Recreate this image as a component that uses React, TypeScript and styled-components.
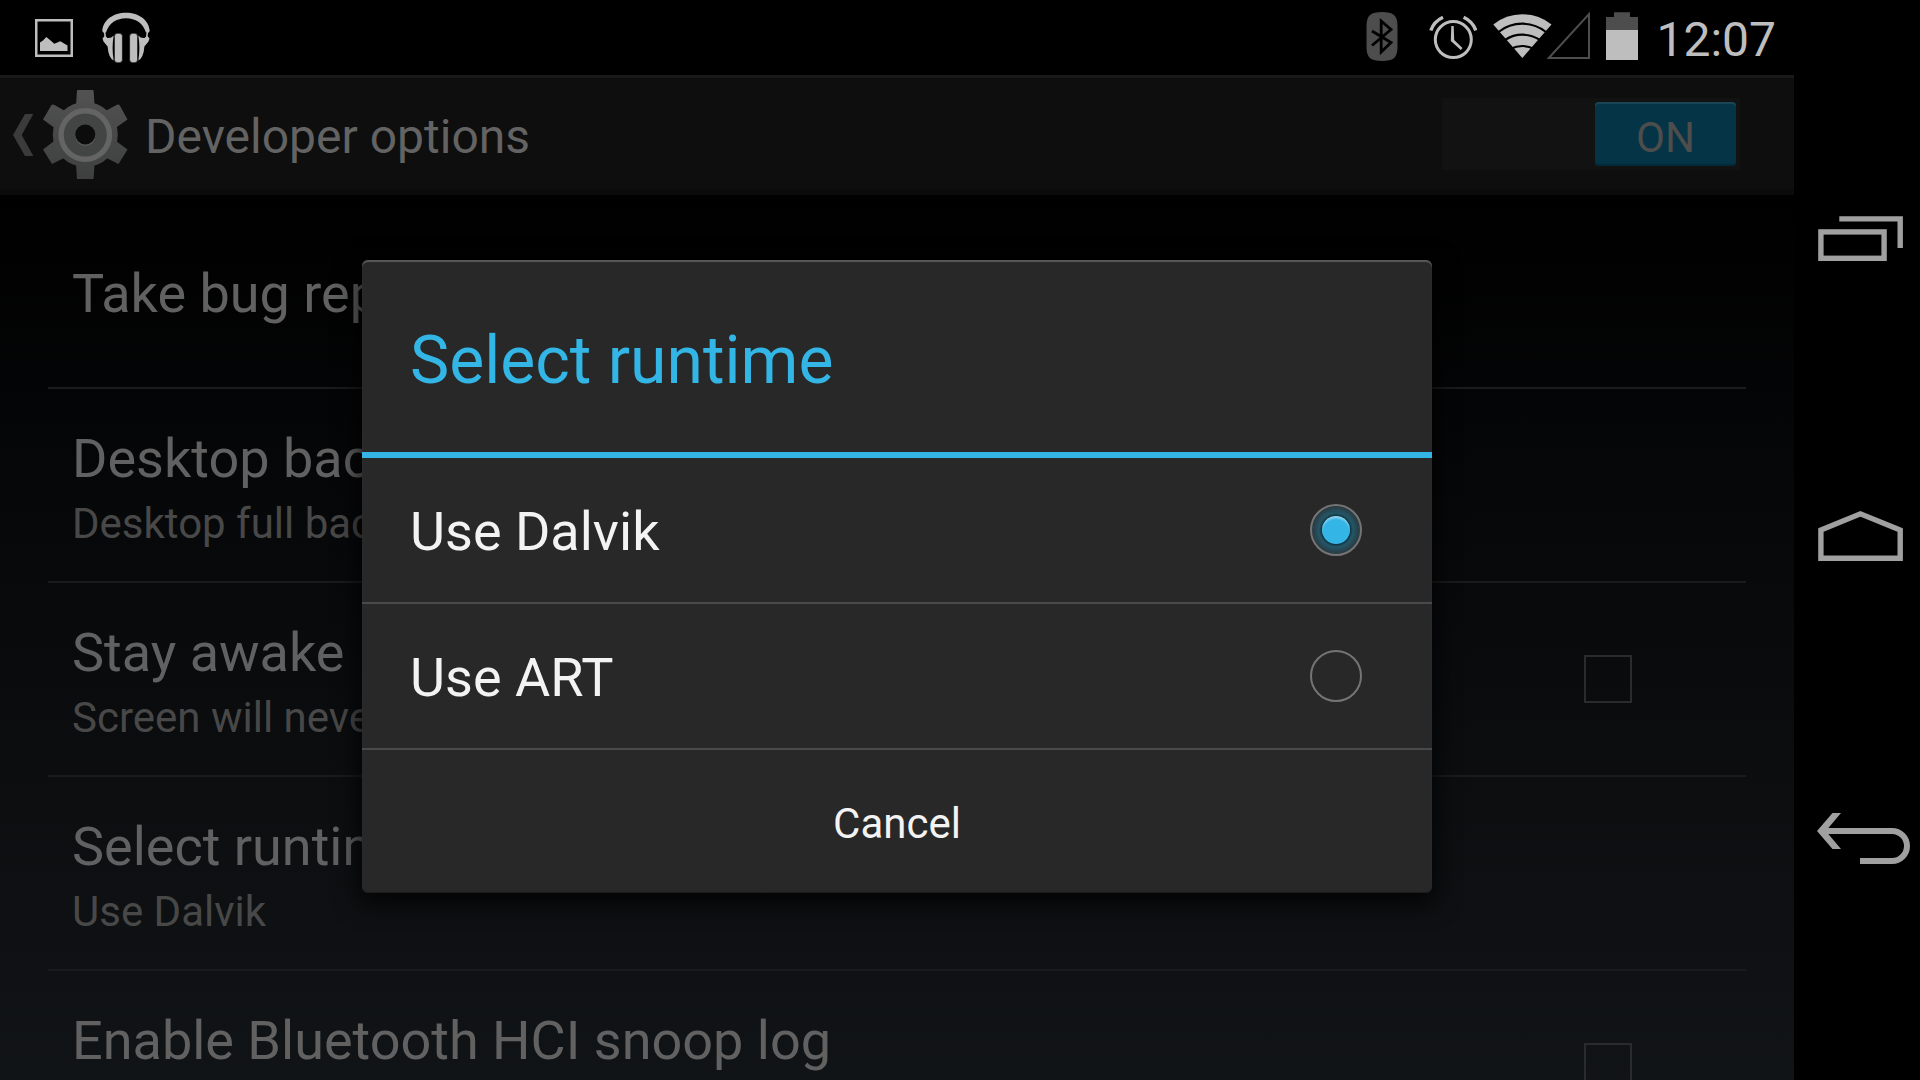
import React, { useState } from "react";
import styled, { createGlobalStyle } from "styled-components";

const GlobalStyle = createGlobalStyle`
  *, *::before, *::after { box-sizing: border-box; }
  html, body { margin: 0; background: #000; }
  body, button, input { font-family: Roboto, "Noto Sans", sans-serif; }
  button { border: 0; background: none; color: inherit; text-align: inherit; cursor: pointer; }
  svg { display: block; }
`;

const Device = styled.div`
  display: flex;
  height: 100vh;
  overflow: hidden;
  background: #000;
`;

const Screen = styled.div`
  flex: 1;
  min-width: 0;
  display: flex;
  flex-direction: column;
`;

const StatusBar = styled.header`
  flex: none;
  display: flex;
  justify-content: space-between;
  height: 75px;
  padding: 0 18px 0 35px;
`;

const StatusGroup = styled.div<{ $gap: number }>`
  display: flex;
  align-items: center;
  gap: ${(p) => p.$gap}px;
`;

const Clock = styled.time`
  padding: 4px 0 0 2px;
  color: #bebebe;
  font-size: 48px;
  line-height: 56px;
`;

const Content = styled.main`
  position: relative;
  flex: 1;
  min-height: 0;
  display: flex;
  flex-direction: column;
  overflow: hidden;
  background: linear-gradient(#000 12%, #07080a 45%, #111416 100%);
`;

const ActionBar = styled.div`
  flex: none;
  display: flex;
  align-items: center;
  justify-content: space-between;
  height: 120px;
  padding-right: 54px;
  border-top: 3px solid #191919;
  border-bottom: 6px solid #0b0b0b;
  background: #0e0e0e;
`;

const UpButton = styled.button`
  display: flex;
  align-items: center;
  gap: 17px;
  padding: 0;
`;

const PageTitle = styled.h1`
  margin: 0;
  padding-top: 6px;
  color: #636363;
  font-size: 48px;
  font-weight: 400;
  line-height: 56px;
`;

const Switch = styled.button`
  display: flex;
  justify-content: flex-end;
  width: 298px;
  height: 72px;
  padding: 4px;
  background: #121212;
  &[aria-checked="false"] { justify-content: flex-start; }
`;

const Thumb = styled.span`
  width: 141px;
  height: 64px;
  padding-top: 6px;
  border-radius: 4px;
  background: #053447;
  box-shadow: inset 0 2px 1px #1c4656, inset 0 -2px 1px #042a39;
  color: #4d4d4d;
  font-size: 42px;
  line-height: 60px;
  text-align: center;
`;

const List = styled.ul`
  margin: 0;
  padding: 0 48px;
  list-style: none;
`;

const Item = styled.li`
  border-bottom: 2px solid #1a1b1c;
`;

const Row = styled.div`
  display: flex;
  align-items: center;
  justify-content: space-between;
  width: 100%;
  height: 192px;
  padding: 0 114px 0 24px;
`;

const Labels = styled.span`
  display: flex;
  flex-direction: column;
  gap: 8px;
  padding-top: 6px;
`;

const RowTitle = styled.span`
  color: #616161;
  font-size: 54px;
  line-height: 64px;
`;

const Summary = styled.span`
  min-height: 50px;
  color: #484848;
  font-size: 42px;
  line-height: 50px;
`;

const CheckBox = styled.input`
  appearance: none;
  flex: none;
  width: 48px;
  height: 48px;
  margin: 0;
  border: 2px solid #2a2b2c;
  &:checked { background: #053447; }
`;

const Overlay = styled.div`
  position: absolute;
  inset: 0;
  display: flex;
  align-items: center;
  justify-content: center;
  padding-bottom: 2px;
`;

const Dialog = styled.section`
  width: 1070px;
  max-width: 90%;
  border-radius: 6px;
  background: #282828;
  box-shadow: inset 0 2px 1px #585858, inset 0 -1px 1px #1c1c1c, 0 8px 24px 4px rgba(0, 0, 0, 0.75);
  color: #f3f3f3;
`;

const DialogTitle = styled.h2`
  margin: 0;
  padding: 62px 48px 52px;
  border-bottom: 6px solid #33b5e5;
  color: #33b5e5;
  font-size: 66px;
  font-weight: 400;
  line-height: 78px;
`;

const Option = styled.label`
  display: flex;
  align-items: center;
  justify-content: space-between;
  height: 146px;
  padding: 0 70px 0 48px;
  border-bottom: 2px solid #4a4a4a;
  font-size: 54px;
  line-height: 64px;
`;

const OptionText = styled.span`
  padding-top: 4px;
`;

const Radio = styled.input`
  appearance: none;
  flex: none;
  width: 52px;
  height: 52px;
  margin: 0;
  border: 2px solid #747474;
  border-radius: 50%;
  &:checked {
    background: radial-gradient(circle, transparent 14px, #10303c 14px, #235768 17px, #29414a 22px, #2a363a 25px);
  }
  &:checked::before {
    content: "";
    display: block;
    width: 28px;
    height: 28px;
    margin: 10px;
    border-radius: 50%;
    background: radial-gradient(circle at 50% 60%, #33b5e5 13px, #a5dff5 17px);
  }
`;

const CancelButton = styled.button`
  display: block;
  width: 100%;
  height: 143px;
  padding: 4px 0 0;
  font-size: 42px;
  line-height: 50px;
  text-align: center;
`;

const NavBar = styled.nav`
  flex: none;
  display: flex;
  flex-direction: column;
  justify-content: center;
  gap: 180px;
  width: 126px;
`;

const NavButton = styled.button`
  padding: 0;
`;

const PictureIcon = () => (
  <svg width="38" height="75" viewBox="0 0 38 75" fill="#bebebe" aria-hidden="true">
    <rect x="1.25" y="20.25" width="35.5" height="35.5" fill="none" stroke="#bebebe" strokeWidth="2.5" />
    <path d="M5 51V42.5L8 40.5 11.3 37 15.3 40.2 19.3 43.8 25.3 41.3 32.5 45.5V51Z" />
  </svg>
);

const HeadphonesIcon = () => (
  <svg width="48" height="75" viewBox="0 0 48 75" fill="#bebebe" aria-hidden="true">
    <path d="M.3 31C1 20 11 12.7 24 12.7S47 20 47.7 31L46.8 32.5H44C41 23 33.5 18.2 24 18.2S7 23 4 32.5H1.2Z" />
    <path d="M2.6 32L3.2 36.5M45.4 32L44.8 36.5" stroke="#bebebe" strokeWidth="1.6" />
    <path d="M.5 38.5L3 35.5 5.500 38Q9 38.6 11.7 35.5 9.5 48 11.7 60.5 6.5 58 5.6 46.5L1.500 41.5Z" />
    <path d="M47.5 38.5L45 35.5 42.5 38Q39 38.6 36.3 35.5 38.5 48 36.3 60.5 41.5 58 42.4 46.5L46.5 41.5Z" />
    <rect x="12.4" y="33.3" width="8" height="29.4" rx="3" stroke="#000" strokeWidth=".6" />
    <rect x="27.6" y="33.3" width="8" height="29.4" rx="3" stroke="#000" strokeWidth=".6" />
  </svg>
);

const BluetoothIcon = () => (
  <svg width="32" height="75" viewBox="0 0 32 75" aria-hidden="true">
    <path d="M16 12C27 12 31.5 15 31.5 26V47C31.5 58 27 61 16 61S.5 58 .5 47V26C.5 15 5 12 16 12Z" fill="#4d4d4d" />
    <path d="M6 31L25 42.5 15.2 52V21L25 29.5 6 45.5" fill="none" stroke="#000" strokeWidth="2.8" />
  </svg>
);

const AlarmIcon = () => (
  <svg width="48" height="75" viewBox="0 0 48 75" fill="none" stroke="#bebebe" aria-hidden="true">
    <circle cx="24.3" cy="39.6" r="18" strokeWidth="3" />
    <path d="M1.8 30.5Q5 21.5 14 17.3M46.8 30.5Q43.6 21.5 34.6 17.3" strokeWidth="3.4" />
    <path d="M22.3 26H24.7L25.2 40 33.5 48 31.8 50 21.8 41Z" fill="#bebebe" stroke="none" />
  </svg>
);

const NetworkIcon = () => (
  <svg width="97" height="75" viewBox="0 0 97 75" aria-hidden="true">
    <path d="M29.3 58L.3 24.5Q13 14.3 29.3 14.3T58.5 24.5Z" fill="#bebebe" />
    <path
      d="M5.5 32Q16 23.7 29.3 23.7T53 32M12 40Q20 34.7 29.3 34.7T47 40M18 48.8Q23 46 29.3 46T40.5 48.8"
      fill="none"
      stroke="#000"
      strokeWidth="2.2"
    />
    <path d="M55.8 58L96 14V58Z" fill="none" stroke="#4d4d4d" strokeWidth="2" />
  </svg>
);

const BatteryIcon = () => (
  <svg width="32" height="75" viewBox="0 0 32 75" aria-hidden="true">
    <path d="M8 12.3H24V17H32V31H0V17H8Z" fill="#4d4d4d" />
    <path d="M0 30H32V60H0Z" fill="#bebebe" />
  </svg>
);

const SettingsIcon = () => (
  <svg width="128" height="111" viewBox="0 0 128 111" aria-hidden="true">
    <defs>
      <linearGradient id="gear" gradientUnits="userSpaceOnUse" x1="0" y1="12" x2="0" y2="101">
        <stop offset="0" stopColor="#525252" />
        <stop offset="1" stopColor="#3e3f3f" />
      </linearGradient>
    </defs>
    <path d="M13 57L25 36H33.3L21.7 57 33.3 78H25Z" fill="#3b3b3b" />
    <g fill="url(#gear)">
      <circle cx="85.3" cy="56.5" r="32.5" />
      <path d="M77 12.5Q77 12 78 12H92.6Q93.6 12 93.6 12.5L94.6 28V85L93.6 101H77L76 85V28Z" />
      <path d="M43 41.5L51.5 27Q53 26 54.5 27L66 33.5 112 60 127.5 71.5 118.5 86 104.5 79 58 52.5Z" />
      <path d="M127.5 41.5L119.5 27Q118 26 116.5 27L104.5 33.5 58 60 43 71.5 52 86 66 79 112 52.5Z" />
    </g>
    <circle cx="85.3" cy="57" r="24.2" fill="#434444" stroke="#646464" strokeWidth="5.4" />
    <circle cx="85.3" cy="58" r="10" fill="#5a5a5a" />
    <circle cx="85.3" cy="56.5" r="10" fill="#0c0c0c" />
  </svg>
);

const navIcon = {
  width: 126,
  height: 120,
  viewBox: "0 0 126 120",
  fill: "none",
  stroke: "#a0a0a0",
  strokeWidth: 5.4,
  "aria-hidden": true,
} as const;

const RecentsIcon = () => (
  <svg {...navIcon}>
    <rect x="26.9" y="51.9" width="63.2" height="26.4" />
    <path d="M45.3 38.9H106.2V68" />
  </svg>
);

const HomeIcon = () => (
  <svg {...navIcon}>
    <path d="M26.9 78.3V50L66.4 33.8 106.2 50V78.3Z" />
  </svg>
);

const BackIcon = () => (
  <svg {...navIcon}>
    <path d="M32 51H98A15 15 0 0 1 98 81H66" strokeWidth="6" />
    <path d="M23 51L38.5 33H47L31.8 51 47 69H38.5Z" fill="#a0a0a0" stroke="none" />
  </svg>
);

const runtimes = ["Use Dalvik", "Use ART"];

export default function App() {
  const [enabled, setEnabled] = useState(true);
  const [runtime, setRuntime] = useState(runtimes[0]);
  const [open, setOpen] = useState(true);

  return (
    <Device>
      <GlobalStyle />
      <Screen>
        <StatusBar>
          <StatusGroup $gap={29}>
            <PictureIcon />
            <HeadphonesIcon />
          </StatusGroup>
          <StatusGroup $gap={16}>
            <StatusGroup $gap={31}>
              <BluetoothIcon />
              <AlarmIcon />
            </StatusGroup>
            <NetworkIcon />
            <BatteryIcon />
            <Clock>12:07</Clock>
          </StatusGroup>
        </StatusBar>
        <Content>
          <ActionBar>
            <UpButton aria-label="Navigate up">
              <SettingsIcon />
              <PageTitle>Developer options</PageTitle>
            </UpButton>
            <Switch
              role="switch"
              aria-checked={enabled}
              aria-label="Developer options"
              onClick={() => setEnabled(!enabled)}
            >
              <Thumb>{enabled ? "ON" : "OFF"}</Thumb>
            </Switch>
          </ActionBar>
          <List>
            <Item>
              <Row as="button">
                <Labels>
                  <RowTitle>Take bug report</RowTitle>
                </Labels>
              </Row>
            </Item>
            <Item>
              <Row as="button">
                <Labels>
                  <RowTitle>Desktop backup password</RowTitle>
                  <Summary>Desktop full backups</Summary>
                </Labels>
              </Row>
            </Item>
            <Item>
              <Row as="label">
                <Labels>
                  <RowTitle>Stay awake</RowTitle>
                  <Summary>Screen will never sleep</Summary>
                </Labels>
                <CheckBox type="checkbox" />
              </Row>
            </Item>
            <Item>
              <Row as="button" onClick={() => setOpen(true)}>
                <Labels>
                  <RowTitle>Select runtime</RowTitle>
                  <Summary>{runtime}</Summary>
                </Labels>
              </Row>
            </Item>
            <Item>
              <Row as="label">
                <Labels>
                  <RowTitle>Enable Bluetooth HCI snoop log</RowTitle>
                  <Summary />
                </Labels>
                <CheckBox type="checkbox" />
              </Row>
            </Item>
          </List>
          {open && (
            <Overlay>
              <Dialog role="dialog" aria-labelledby="dialog-title">
                <DialogTitle id="dialog-title">Select runtime</DialogTitle>
                {runtimes.map((name) => (
                  <Option key={name}>
                    <OptionText>{name}</OptionText>
                    <Radio
                      type="radio"
                      name="runtime"
                      checked={runtime === name}
                      onChange={() => setRuntime(name)}
                    />
                  </Option>
                ))}
                <CancelButton onClick={() => setOpen(false)}>Cancel</CancelButton>
              </Dialog>
            </Overlay>
          )}
        </Content>
      </Screen>
      <NavBar aria-label="System">
        <NavButton aria-label="Recent apps">
          <RecentsIcon />
        </NavButton>
        <NavButton aria-label="Home">
          <HomeIcon />
        </NavButton>
        <NavButton aria-label="Back">
          <BackIcon />
        </NavButton>
      </NavBar>
    </Device>
  );
}
